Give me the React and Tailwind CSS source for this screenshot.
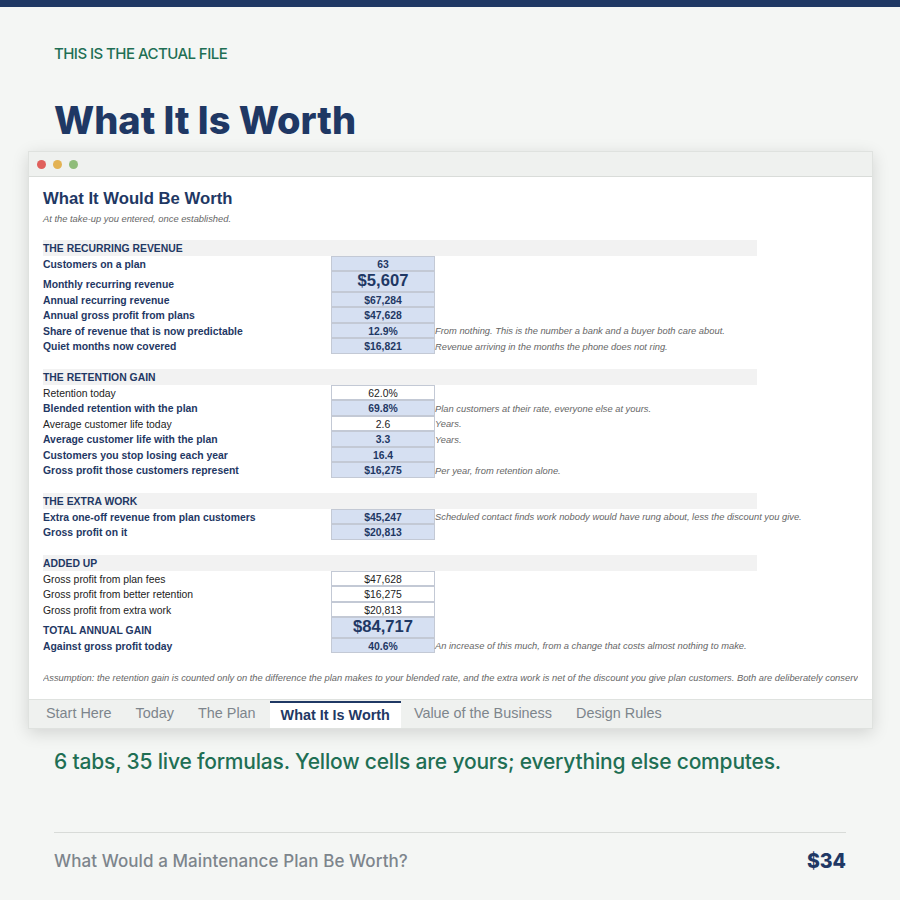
const display = "font-['Inter','Lato',sans-serif]";

const rows = [
  { type: "head", label: "THE RECURRING REVENUE" },
  { label: "Customers on a plan", value: "63", calc: true },
  { label: "Monthly recurring revenue", value: "$5,607", calc: true, big: true },
  { label: "Annual recurring revenue", value: "$67,284", calc: true },
  { label: "Annual gross profit from plans", value: "$47,628", calc: true },
  { label: "Share of revenue that is now predictable", value: "12.9%", calc: true, note: "From nothing. This is the number a bank and a buyer both care about." },
  { label: "Quiet months now covered", value: "$16,821", calc: true, note: "Revenue arriving in the months the phone does not ring." },
  { type: "gap" },
  { type: "head", label: "THE RETENTION GAIN" },
  { label: "Retention today", value: "62.0%" },
  { label: "Blended retention with the plan", value: "69.8%", calc: true, note: "Plan customers at their rate, everyone else at yours." },
  { label: "Average customer life today", value: "2.6", note: "Years." },
  { label: "Average customer life with the plan", value: "3.3", calc: true, note: "Years." },
  { label: "Customers you stop losing each year", value: "16.4", calc: true },
  { label: "Gross profit those customers represent", value: "$16,275", calc: true, note: "Per year, from retention alone." },
  { type: "gap" },
  { type: "head", label: "THE EXTRA WORK" },
  { label: "Extra one-off revenue from plan customers", value: "$45,247", calc: true, note: "Scheduled contact finds work nobody would have rung about, less the discount you give." },
  { label: "Gross profit on it", value: "$20,813", calc: true },
  { type: "gap" },
  { type: "head", label: "ADDED UP" },
  { label: "Gross profit from plan fees", value: "$47,628" },
  { label: "Gross profit from better retention", value: "$16,275" },
  { label: "Gross profit from extra work", value: "$20,813" },
  { label: "TOTAL ANNUAL GAIN", value: "$84,717", calc: true, big: true },
  { label: "Against gross profit today", value: "40.6%", calc: true, note: "An increase of this much, from a change that costs almost nothing to make." },
];

const tabs = ["Start Here", "Today", "The Plan", "What It Is Worth", "Value of the Business", "Design Rules"];

function Row({ row }) {
  if (row.type === "gap") return <div className="h-[15.5px]" />;

  if (row.type === "head") {
    return (
      <div className="h-[15.5px] w-[714px] pt-[2px] bg-[#f2f2f2] flex items-center text-[10.4px] font-bold text-[#1f3864]">
        {row.label}
      </div>
    );
  }

  return (
    <div className={`flex items-stretch ${row.big ? "h-[20.5px]" : "h-[15.5px]"}`}>
      <div className={`w-[288px] flex items-center text-[10.4px] ${row.calc ? "font-bold text-[#1f3864]" : "text-[#222222]"} ${row.big ? "pt-[8px]" : "pt-[3px]"}`}>
        {row.label}
      </div>
      <div className={`w-[104px] flex items-center justify-center border border-[#c3c9d5] ${row.calc ? "bg-[#d6e0f2] font-bold text-[#1f3864]" : "bg-white text-[#222222]"} ${row.big ? "text-[16.6px]" : "text-[10.4px] pt-[3px]"}`}>
        {row.value}
      </div>
      {row.note && (
        <div className="flex items-center pt-[2px] text-[9.35px] italic text-[#666666] whitespace-nowrap">
          {row.note}
        </div>
      )}
    </div>
  );
}

export default function App() {
  return (
    <div className="w-[900px] h-[900px] bg-[#f4f6f4] flex flex-col overflow-hidden">
      <div className="h-[7px] bg-[#1f3864]" />

      <div className={`${display} pl-[54px] pt-[38px] h-[144px]`}>
        <div className="text-[15px] leading-[18px] font-medium tracking-[-0.55px] text-[#1f6f54]">THIS IS THE ACTUAL FILE</div>
        <h1 className="mt-[32px] text-[38px] leading-[50px] font-extrabold text-[#1f3864]">What It Is Worth</h1>
      </div>

      <div className="ml-[28px] w-[845px] h-[578px] flex flex-col bg-white border border-[#dfe2df] shadow-[0_4px_16px_rgba(0,0,0,0.14)] font-['Liberation_Sans',Arial,sans-serif]">
        <div className="h-[25px] shrink-0 flex items-center gap-[7px] pl-[8px] bg-[#eff1ef] border-b border-[#d9dcd9]">
          <span className="w-[9px] h-[9px] rounded-full bg-[#e0605c]" />
          <span className="w-[9px] h-[9px] rounded-full bg-[#e3b253]" />
          <span className="w-[9px] h-[9px] rounded-full bg-[#8fbc7a]" />
        </div>

        <div className="flex-1 min-h-0 pl-[14px] pr-[14px] flex flex-col">
          <div className="mt-[11px] h-[22px] flex items-center text-[16.7px] font-bold text-[#1f3864]">What It Would Be Worth</div>
          <div className="mt-[2px] h-[13px] flex items-center text-[9.35px] italic text-[#666666]">At the take-up you entered, once established.</div>
          <div className="mt-[15px]">
            {rows.map((row, i) => (
              <Row key={i} row={row} />
            ))}
          </div>
          <div className="mt-[18px] h-[15px] flex items-center text-[9.35px] italic text-[#666666] whitespace-nowrap overflow-hidden">
            Assumption: the retention gain is counted only on the difference the plan makes to your blended rate, and the extra work is net of the discount you give plan customers. Both are deliberately conservative.
          </div>
        </div>

        <div className="h-[29px] shrink-0 flex pl-[5px] bg-[#eff1ef] border-t border-[#dfe2df]">
          {tabs.map((tab) =>
            tab === "What It Is Worth" ? (
              <div key={tab} className="mt-px ml-[2px] mr-px px-[11px] flex items-center bg-white border-t-[2px] border-[#1f3864] text-[14.4px] font-bold text-[#1f3864]">
                {tab}
              </div>
            ) : (
              <div key={tab} className="px-[12px] flex items-center text-[14.4px] text-[#7d858c]">
                {tab}
              </div>
            )
          )}
        </div>
      </div>

      <div className={`${display} mt-[19px] ml-[54px] text-[21px] leading-[28px] font-medium tracking-[-0.19px] text-[#1f6f54]`}>
        6 tabs, 35 live formulas. Yellow cells are yours; everything else computes.
      </div>

      <div className={`${display} mt-[56px] mx-[54px] pt-[14px] border-t border-[#d8dbd8] flex items-center justify-between`}>
        <span className="text-[17px] font-medium tracking-[0.08px] text-[#7d858c]">What Would a Maintenance Plan Be Worth?</span>
        <span className="text-[19.5px] font-extrabold text-[#1f3864]">$34</span>
      </div>
    </div>
  );
}
